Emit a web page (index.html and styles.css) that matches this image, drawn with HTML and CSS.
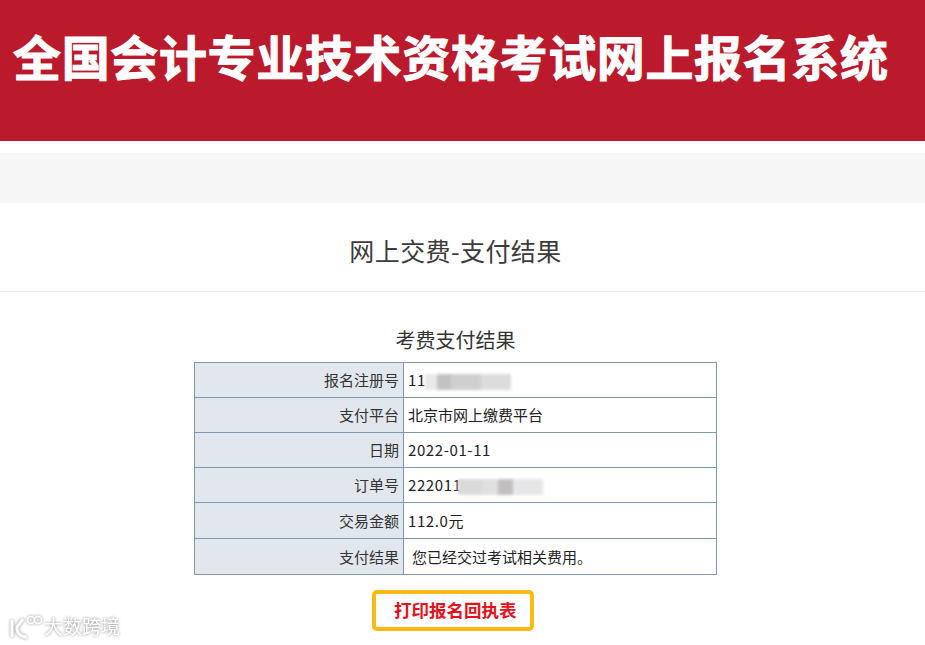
FILE: index.html
```html
<!DOCTYPE html>
<html lang="zh-CN">
<head>
    <meta charset="UTF-8">
    <title>全国会计专业技术资格考试网上报名系统</title>
    <link rel="stylesheet" href="styles.css">
</head>
<body>
    <div class="header">
        <h1>全国会计专业技术资格考试网上报名系统</h1>
    </div>
    <div class="nav-bar"></div>

    <h2 class="page-title">网上交费-支付结果</h2>

    <div class="content">
        <h3>考费支付结果</h3>
        <table class="result-table">
            <tr>
                <th>报名注册号</th>
                <td><span class="num">11</span><span class="mask mask-a"><i class="m1"></i><i class="m2"></i><i class="m3"></i><i class="m4"></i></span></td>
            </tr>
            <tr>
                <th>支付平台</th>
                <td>北京市网上缴费平台</td>
            </tr>
            <tr>
                <th>日期</th>
                <td><span class="num">2022-01-11</span></td>
            </tr>
            <tr>
                <th>订单号</th>
                <td><span class="num">222011</span><span class="mask mask-b"><i class="m5"></i><i class="m6"></i><i class="m7"></i><i class="m8"></i></span></td>
            </tr>
            <tr class="tall-row">
                <th>交易金额</th>
                <td><span class="num">112.0</span>元</td>
            </tr>
            <tr class="tall-row">
                <th>支付结果</th>
                <td><span class="note">您已经交过考试相关费用。</span></td>
            </tr>
        </table>
        <a class="print-btn" href="#">打印报名回执表</a>
    </div>

    <div class="watermark">
        <svg width="38" height="28" viewBox="0 0 38 28" fill="none" stroke="#fff">
            <path d="M8 8 L8 25" stroke-width="3"/>
            <path d="M19 7 L13 15 C12 20 16 25 23 25" stroke-width="3"/>
            <circle cx="27" cy="8" r="3.5" stroke-width="1.6"/>
            <circle cx="34" cy="8" r="3.5" stroke-width="1.6"/>
        </svg>
        <span>大数跨境</span>
    </div>
</body>
</html>
```

FILE: styles.css
```css
html, body {
    height: 100%;
    overflow: hidden;
}
body {
    margin: 0;
    position: relative;
    background-color: #fff;
    font-family: "Noto Sans CJK SC", "Liberation Sans", sans-serif;
    color: #333;
}
.header {
    height: 141px;
    background-color: #bb1a2c;
    padding: 25px 0 0 13px;
    box-sizing: border-box;
}
.header h1 {
    margin: 0;
    font-size: 48px;
    line-height: 60px;
    letter-spacing: 0.65px;
    font-weight: 700;
    color: #fff;
    white-space: nowrap;
    -webkit-text-stroke: 1px #fff;
}
.nav-bar {
    height: 50px;
    margin-top: 12px;
    background-color: #f6f6f6;
}
.page-title {
    margin: 0;
    height: 88px;
    line-height: 94px;
    padding-right: 14px;
    text-align: center;
    font-size: 25px;
    letter-spacing: 0.4px;
    font-weight: 400;
    color: #3c3c3c;
    border-bottom: 1px solid #e9e9e9;
}
.content {
    display: flex;
    flex-direction: column;
    align-items: center;
    padding-right: 14px;
}
.content h3 {
    margin: 33px 0 7px;
    font-size: 20px;
    line-height: 30px;
    font-weight: 400;
    color: #333;
}
.result-table {
    width: 523px;
    border-collapse: collapse;
    font-size: 15px;
    line-height: 20px;
    color: #222;
}
.result-table th,
.result-table td {
    height: 35px;
    padding: 0 4px;
    border: 1px solid #7c98b3;
    font-weight: 400;
    white-space: nowrap;
    box-sizing: border-box;
}
.result-table th {
    width: 209px;
    text-align: right;
    background-color: #e2e7ee;
    color: #333;
}
.result-table .tall-row th,
.result-table .tall-row td {
    height: 36px;
}
.num {
    letter-spacing: 0.6px;
}
.note {
    padding-left: 4px;
}
.mask {
    display: inline-flex;
    vertical-align: middle;
    height: 16px;
    filter: blur(1.5px);
}
.mask i {
    display: block;
    height: 100%;
}
.mask-a {
    margin-left: -1px;
}
.mask-b {
    margin-left: -4px;
}
.m1 { width: 12px; background-color: #e9e9e9; }
.m2 { width: 14px; background-color: #c2c2c2; }
.m3 { width: 30px; background-color: #cfcfcf; }
.m4 { width: 30px; background-color: #dcdcdc; }
.m5 { width: 24px; background-color: #dadada; }
.m6 { width: 16px; background-color: #e0e0e0; }
.m7 { width: 15px; background-color: #c2bfbf; }
.m8 { width: 30px; background-color: #e6e6e8; }
.print-btn {
    display: block;
    box-sizing: border-box;
    width: 162px;
    height: 41px;
    margin-top: 15px;
    margin-right: 5px;
    padding-left: 18px;
    border: 4px solid #fdb913;
    border-radius: 5px;
    font-size: 17.5px;
    line-height: 32px;
    font-weight: 700;
    color: #e8101c;
    text-decoration: none;
    white-space: nowrap;
}
.watermark {
    position: absolute;
    left: 4px;
    top: 612px;
    display: flex;
    align-items: center;
    gap: 2px;
    color: #fff;
    font-size: 19px;
    line-height: 28px;
    filter: drop-shadow(0 0 1.5px #888);
}
```
